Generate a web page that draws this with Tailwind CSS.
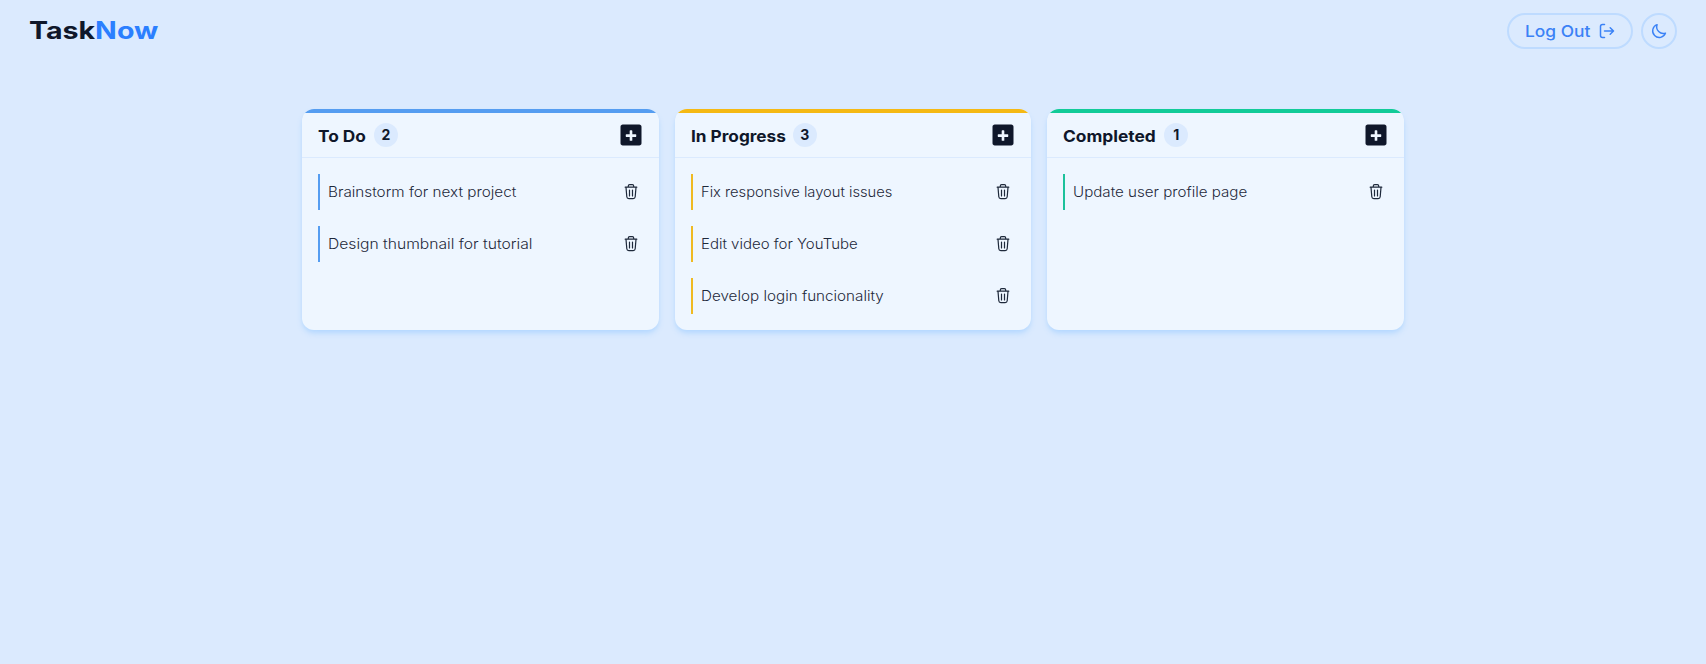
<!DOCTYPE html>
<html lang="en">
<head>
<meta charset="UTF-8">
<title>TaskNow</title>
<script src="https://cdn.jsdelivr.net/npm/@tailwindcss/browser@4"></script>
</head>
<body class="min-h-screen bg-[#dbeafe] font-['Inter',sans-serif] text-[#0f172a]">
<svg class="hidden">
  <symbol id="plus" viewBox="0 0 448 512"><path fill="currentColor" d="M400 32H48C21.500 32 0 53.500 0 80v352c0 26.500 21.500 48 48 48h352c26.500 0 48-21.500 48-48V80c0-26.500-21.500-48-48-48zm-64 252c0 6.600-5.400 12-12 12h-72v72c0 6.600-5.400 12-12 12h-32c-6.600 0-12-5.400-12-12v-72h-72c-6.600 0-12-5.400-12-12v-32c0-6.600 5.400-12 12-12h72v-72c0-6.600 5.400-12 12-12h32c6.600 0 12 5.400 12 12v72h72c6.600 0 12 5.400 12 12v32z"/></symbol>
  <symbol id="trash" viewBox="0 0 14 16"><path fill="none" stroke="currentColor" stroke-width="1.200" stroke-linecap="round" stroke-linejoin="round" d="M1.200 3.200h11.600M4.300 3V2c0-.8.5-1.300 1.300-1.300h2.800c.8 0 1.300.5 1.300 1.300v1M2 3.400l.8 9.400c.1 1.200.8 1.900 2 1.900h4.400c1.200 0 1.900-.7 2-1.900l.8-9.400M5.500 6v6M8.500 6v6"/></symbol>
</svg>
<header class="flex h-[61px] items-center justify-between pr-[29px] pl-[29px]">
  <h1 class="origin-left scale-x-[1.19] text-2xl leading-8 font-bold">Task<span class="text-[#2b7fff]">Now</span></h1>
  <div class="flex items-center gap-2">
    <button class="flex h-9 w-[126px] items-center justify-between rounded-full border-2 border-[#bedbff] pr-[16px] pl-[16px] text-[#3b82f6]">
      <span class="origin-left scale-x-[1.085] text-base font-medium whitespace-nowrap">Log Out</span>
      <svg class="h-4 w-4" viewBox="0 0 16 16" fill="none" stroke="currentColor" stroke-width="1.500" stroke-linecap="round" stroke-linejoin="round"><path d="M5.500 1.500h-2C2.200 1.500 1.500 2.200 1.500 3.500v9c0 1.300.7 2 2 2h2M5.500 8H14.500M11.200 4.700 14.500 8l-3.300 3.300"/></svg>
    </button>
    <button class="flex size-9 items-center justify-center rounded-full border-2 border-[#bedbff] text-[#3b82f6]">
      <svg class="h-4 w-4" viewBox="0 0 16 16" fill="none" stroke="currentColor" stroke-width="1.400" stroke-linejoin="round"><path d="M6.100 1.700A6.600 6.600 0 1 0 14.500 10.100 6.600 6.600 0 0 1 6.100 1.700Z"/></svg>
    </button>
  </div>
</header>
<main class="mx-auto mt-12 grid w-[1102px] grid-cols-3 gap-4">
  <section class="h-[221px] overflow-hidden rounded-xl bg-[#eef6ff] shadow-md shadow-[#b5d8ff]">
    <div class="h-1 bg-[#559df1]"></div>
    <div class="flex h-[45px] items-center justify-between border-b border-[#dbeafe] pr-[17px] pl-4">
      <div class="flex items-center gap-2">
        <h2 class="w-12 origin-left scale-x-[1.08] pt-0.5 text-base font-bold whitespace-nowrap">To Do</h2>
        <span class="flex size-6 items-center justify-center rounded-full bg-[#dbeafe] text-sm font-bold">2</span>
      </div>
      <svg class="h-6 w-[22px]"><use href="#plus"/></svg>
    </div>
    <ul class="flex flex-col gap-4 p-4 text-sm font-light text-[#1e293b]">
      <li class="flex h-9 items-center justify-between border-l-2 border-[#559df1] pr-[5px] pl-2"><span class="origin-left scale-x-[1.09]">Brainstorm for next project</span><svg class="h-4 w-[14px]"><use href="#trash"/></svg></li>
      <li class="flex h-9 items-center justify-between border-l-2 border-[#559df1] pr-[5px] pl-2"><span class="origin-left scale-x-[1.118]">Design thumbnail for tutorial</span><svg class="h-4 w-[14px]"><use href="#trash"/></svg></li>
    </ul>
  </section>
  <section class="h-[221px] overflow-hidden rounded-xl bg-[#eef6ff] shadow-md shadow-[#b5d8ff]">
    <div class="h-1 bg-[#f5b914]"></div>
    <div class="flex h-[45px] items-center justify-between border-b border-[#dbeafe] pr-[17px] pl-4">
      <div class="flex items-center gap-[7px]">
        <h2 class="w-[95px] origin-left scale-x-[1.075] pt-0.5 text-base font-bold whitespace-nowrap">In Progress</h2>
        <span class="flex size-6 items-center justify-center rounded-full bg-[#dbeafe] text-sm font-bold">3</span>
      </div>
      <svg class="h-6 w-[22px]"><use href="#plus"/></svg>
    </div>
    <ul class="flex flex-col gap-4 p-4 text-sm font-light text-[#1e293b]">
      <li class="flex h-9 items-center justify-between border-l-2 border-[#efba22] pr-[5px] pl-2"><span class="origin-left scale-x-[1.05]">Fix responsive layout issues</span><svg class="h-4 w-[14px]"><use href="#trash"/></svg></li>
      <li class="flex h-9 items-center justify-between border-l-2 border-[#efba22] pr-[5px] pl-2"><span class="origin-left scale-x-[1.07]">Edit video for YouTube</span><svg class="h-4 w-[14px]"><use href="#trash"/></svg></li>
      <li class="flex h-9 items-center justify-between border-l-2 border-[#efba22] pr-[5px] pl-2"><span class="origin-left scale-x-[1.086]">Develop login funcionality</span><svg class="h-4 w-[14px]"><use href="#trash"/></svg></li>
    </ul>
  </section>
  <section class="h-[221px] overflow-hidden rounded-xl bg-[#eef6ff] shadow-md shadow-[#b5d8ff]">
    <div class="h-1 bg-[#12cb98]"></div>
    <div class="flex h-[45px] items-center justify-between border-b border-[#dbeafe] pr-[17px] pl-4">
      <div class="flex items-center gap-2">
        <h2 class="w-[93px] origin-left scale-x-[1.085] pt-0.5 text-base font-bold whitespace-nowrap">Completed</h2>
        <span class="flex size-6 items-center justify-center rounded-full bg-[#dbeafe] text-sm font-bold">1</span>
      </div>
      <svg class="h-6 w-[22px]"><use href="#plus"/></svg>
    </div>
    <ul class="flex flex-col gap-4 p-4 text-sm font-light text-[#1e293b]">
      <li class="flex h-9 items-center justify-between border-l-2 border-[#1cc19b] pr-[5px] pl-2"><span class="origin-left scale-x-[1.08]">Update user profile page</span><svg class="h-4 w-[14px]"><use href="#trash"/></svg></li>
    </ul>
  </section>
</main>
</body>
</html>
